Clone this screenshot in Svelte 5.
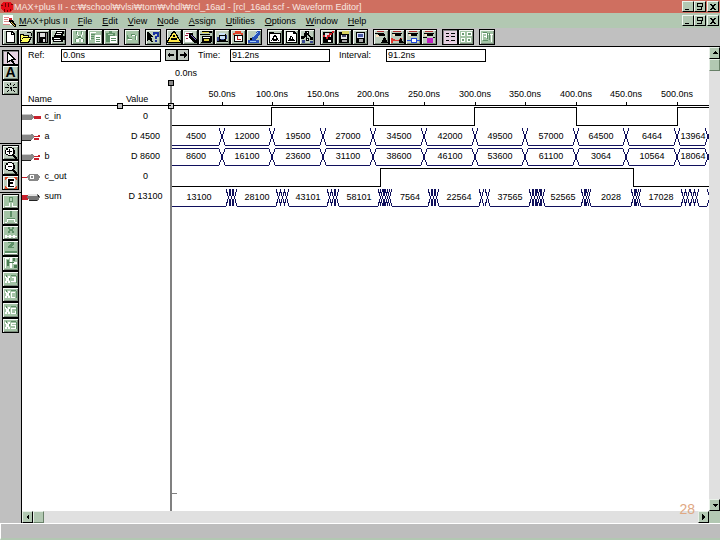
<script>
	const menus = ['MAX+plus II', 'File', 'Edit', 'View', 'Node', 'Assign', 'Utilities', 'Options', 'Window', 'Help'];

	// each icon is a list of [fill, path] on a 16x16 grid
	const icons = {
		page: [['#000', 'M4 2h6l3 3v9H4z'], ['#fff', 'M5 3h4v3h3v7H5z'], ['#fff', 'M10 4h1v1h-1z']],
		open: [['#000', 'M9 3h4v1H9zM13 4h1v3h-1zM2 5h4v1h5v2h3l-3 6H2z'], ['#ffff60', 'M3 6h2v1h5v1H5l-2 4zM5 9h7l-2 4H3z']],
		save: [['#000', 'M3 3h11v11H3z'], ['#888', 'M4 4h1v9H4zM12 4h1v9h-1z'], ['#ddd', 'M6 4h5v4H6zM9 10h2v3H9z']],
		print: [['#000', 'M6 2h8v3h-1v2h2v4h-2v2H3v-2H2V8h2V6h1z'], ['#fff', 'M7 3h5v1H7zM6 5h5v1H6zM4 9h6v1H4zM4 11h7v1H4z']],
		cut: [['#fff', 'M6 3h1v3H6zM11 3h1v3h-1zM7 6h1v2H7zM10 6h1v2h-1zM8 8h2v2H8zM5 10h3v3H5zM10 10h3v3h-3z'], ['#5e8f67', 'M5 2h1v3H5zM10 2h1v3h-1zM7 7h3v2H7zM5 9h2v1H5zM4 10h1v3H4zM10 9h2v1h-2zM12 10h1v3h-1z']],
		copy: [['#fff', 'M3 3h6v1H3zM3 3h1v8H3zM8 6h6v8H8z'], ['#5e8f67', 'M4 5h4v1H4zM4 7h3v1H4zM4 9h3v1H4zM9 8h4v1H9zM9 10h4v1H9zM9 12h4v1H9z']],
		paste: [['#5e8f67', 'M3 4h9v9H3zM6 2h3v2H6z'], ['#b5d0b5', 'M5 5h5v1H5z'], ['#fff', 'M7 7h7v7H7z'], ['#5e8f67', 'M8 9h5v1H8zM8 11h5v1H8z']],
		undo: [['#5e8f67', 'M3 6h1v2h1v1h3v1H3zM7 5h4v1h1v5h-1V7H7z'], ['#fff', 'M4 10h4v1H4zM8 6h3v1H8zM12 7h1v4h-1z']],
		help: [['#000', 'M2 3h1l5 5H6l2 5H6L4 10l-2 2z'], ['#1830a0', 'M8 3h6v5h-2v2h-2V7h2V5h-2v1H8zM10 11h2v2h-2z']],
		triangle: [['#000', 'M7 2h2l6 10v2H1v-2z'], ['#ffe84a', 'M7 4h2l5 9H2z'], ['#000', 'M7 6h2v2H7zM5 9h6v2H5z']],
		probe: [['#fff', 'M3 3h7v10H3z'], ['#a02040', 'M4 4h6v1H4zM3 6h3v1H3zM4 9h2v1H4z'], ['#000', 'M7 4h4v3l4 4v3h-3l-5-6z'], ['#8068d0', 'M9 6h1l4 5h-1z']],
		monitor: [['#000', 'M4 2h10v2H4zM2 5h10v1H2zM4 7h10v6H4z'], ['#e0d040', 'M4 3h7v1H4zM6 10h5v2H6z'], ['#fff', 'M5 8h7v1H5z'], ['#000', 'M3 13h10v1H3z']],
		chip: [['#000', 'M5 5h7v8H5zM3 12h11v1H3z'], ['#c8e0f8', 'M5 4h6v2H5zM6 7h5v3H6z'], ['#304090', 'M3 8h2v4H3zM12 6h1v4h-1zM7 10h3v1H7z']],
		clock: [['#e04028', 'M5 2h6v3H5zM3 4h2v2H3zM11 4h2v2h-2z'], ['#000', 'M4 6h9v7H4z'], ['#fff', 'M5 7h7v5H5z'], ['#b02020', 'M7 7h1v3h3v1H7z']],
		pen: [['#2850b8', 'M11 2h3v3l-4 6H6l-1-2 4-3zM2 11h11v3H2z'], ['#a8d0f8', 'M11 3h1l-4 5H7zM4 12h6v1H4z'], ['#000', 'M4 9h2v2H4z']],
		top: [['#000', 'M2 3h5v1h7v10H2z'], ['#fff', 'M3 5h10v8H3z'], ['#000', 'M7 6h2l3 6H4z'], ['#fff', 'M7 8h2v2H7zM5 11h1v1H5zM10 11h1v1h-1z']],
		sheet: [['#000', 'M3 2h8l3 3v9H3z'], ['#fff', 'M4 3h6v2h3v8H4z'], ['#000', 'M8 6l4 6H5z'], ['#fff', 'M8 8h1v2H8z']],
		tree: [['#000', 'M6 2h4v3H9l3 3h2v3h-3V9L8 6v3h2v3H7V7L4 10H2V7h3z'], ['#384890', 'M3 11h3v3H3zM11 12h3v2h-3z'], ['#fff', 'M8 3h1v1H8zM8 10h1v1H8z']],
		check: [['#000', 'M3 3h10v11H3z'], ['#ddd', 'M5 4h6v4H5z'], ['#d02028', 'M3 6h2v2h2V6h2V4h3V2h2v2h-2v2h-2v2H8v2H6V8H3z'], ['#fff', 'M8 11h3v2H8z']],
		disk: [['#000', 'M3 3h10v11H3z'], ['#d8d060', 'M6 2h7v3H6z'], ['#e4e4e4', 'M5 6h6v4H5z'], ['#446', 'M6 6h4v2H6z'], ['#aaa', 'M6 11h5v2H6z']],
		floppy: [['#000', 'M4 3h9v11H4z'], ['#dde4ff', 'M5 4h7v5H5z'], ['#4858a0', 'M6 5h5v3H6z'], ['#aaa', 'M7 10h4v3H7z']],
		faceUp: [['#b03030', 'M4 2h7v1H4z'], ['#000', 'M2 4h9v1H2zM5 5h7v2H5zM11 8h1l3 6H8z'], ['#ffe0c0', 'M3 6h3v2H3z']],
		faceRed: [['#b03030', 'M4 2h8v1H4z'], ['#000', 'M3 4h10v1H3zM6 5h6v2H6z'], ['#e03830', 'M2 9h2v1h2v1h4v-1h1V9h2v5h-2v-2H4v2H2z'], ['#ffe0c0', 'M4 5h2v2H4z'], ['#000', 'M11 9h1l3 5h-5z']],
		faceBlue: [['#b03030', 'M4 2h8v1H4z'], ['#000', 'M3 4h10v1H3zM6 5h6v2H6z'], ['#2048d8', 'M2 11h4V9h6v2h3v1h-3v2H6v-2H2z'], ['#fff', 'M7 10h4v3H7z'], ['#ffe0c0', 'M4 5h2v2H4z']],
		faceMag: [['#b03030', 'M4 2h8v1H4z'], ['#000', 'M3 4h10v1H3zM6 5h6v2H6z'], ['#c020c0', 'M6 9h6v5H6z'], ['#000', 'M2 8h4v1H2zM12 8h2v1h-2z'], ['#ffe0c0', 'M4 5h2v2H4z']],
		bars: [['#000', 'M4 4h3v1H4zM9 4h4v1H9zM4 7h3v1H4zM9 7h4v1H9zM4 11h3v1H4zM9 11h4v1H9z'], ['#e8a0c8', 'M7 6h2v1H7zM7 12h2v1H7z']],
		boxes: [['#fff', 'M3 3h4v4H3zM9 3h5v4H9zM3 9h4v4H3zM9 9h4v4H9z'], ['#6d9b73', 'M4 4h2v2H4zM10 4h3v2h-3zM4 10h2v2H4zM10 10h2v2h-2z']],
		find: [['#fff', 'M3 4h5v1H3zM3 4h1v7H3zM5 7h3v1H5zM7 4h1v5H7zM9 5h5v1H9zM12 5h1v8h-1z'], ['#5e8f67', 'M4 3h4v1H4zM8 4h1v6H8zM4 11h5v1H4zM10 4h1v7h-1z']],
		arrow: [['#000', 'M4 2h1l8 8h-3l2 4h-2l-2-3-4 2z'], ['#fff', 'M5 4l5 5H8l-1 1-2 1z']],
		edge: [['#000', 'M2 7h4v1H2zM10 7h4v1h-4zM7 7h2v2H7zM4 4h1v1H4zM5 5h1v1H5zM11 4h1v1h-1zM10 5h1v1h-1zM4 12h1v-1H4zM5 10h1v1H5zM11 11h1v1h-1zM10 10h1v1h-1zM7 3h1v2H7zM8 9h1v2H8z']],
		plus: [['#000', 'M5 2h4v1h2v2h1v4h-1v1l3 3v1h-2l-3-3H5v-1H3V9H2V5h1V3h2z'], ['#fff', 'M5 3h4v1h1v5H9v1H5V9H3V5h2z'], ['#000', 'M6 4h1v2h2v1H7v2H6V7H4V6h2z']],
		minus: [['#000', 'M5 2h4v1h2v2h1v4h-1v1l3 3v1h-2l-3-3H5v-1H3V9H2V5h1V3h2z'], ['#fff', 'M5 3h4v1h1v5H9v1H5V9H3V5h2z'], ['#000', 'M5 6h4v1H5z']],
		fit: [['#fff', 'M4 3h8v10H4z'], ['#e04828', 'M2 2h3v1H4v1H3v1H2zM11 2h3v3h-1V4h-1V3h-1zM2 11h1v1h1v1h1v1H2zM13 11h1v3h-3v-1h1v-1h1z'], ['#000', 'M5 4h6v2H7v1h3v2H7v2h4v1H5z']],
		low: [['#5e8f67', 'M6 3h4v5H6z'], ['#b2d0b4', 'M7 4h2v3H7z'], ['#fff', 'M2 12h4V9h1v4H2zM9 9h1v3h4v1H9z']],
		high: [['#5e8f67', 'M7 2h2v6H7zM4 9h8v1H4z'], ['#fff', 'M4 10h1v3H4zM5 10h6v1H5zM11 10h1v3h-1zM2 13h2v1H2zM12 13h2v1h-2z']],
		unknown: [['#5e8f67', 'M5 2h2v2h2V2h2v2h-1v2h1v2H9V6H7v2H5V6h1V4H5z'], ['#fff', 'M2 10h2v1h2v-1h2v1h2v-1h2v1h2v1h-2v1h-2v-1H8v1H6v-1H4v1H2z']],
		tri: [['#5e8f67', 'M5 2h6v2L8 7h3v1H5V6l3-3H5zM2 11h12v2H2z'], ['#fff', 'M2 13h12v1H2z']],
		invert: [['#fff', 'M2 3h4v1H3v9H2zM7 3h2v10H7zM10 7h4v2h-4z'], ['#4b7d54', 'M4 5h2v6H4zM10 3h2v3h-2zM11 10h3v3h-3zM6 7h5v1H6z']]
	};

	const xIcon = (letter) => [
		['#fff', 'M2 5h2v2h1V5h2v2H6v3h1v2H5v-2H4v2H2v-2h1V7H2z' + letter],
		['#5e8f67', 'M3 4h1v2H3zM6 7h1v2H6zM8 4h5v1H8zM13 5h1v7h-1z']
	];
	icons.count = xIcon('M9 6h4v1H9zM11 7h2v4H8v-1h3z');
	icons.clk = xIcon('M8 6h4v1H9v4h3v1H8z');
	icons.group = xIcon('M8 6h5v1H9v4h3V9h1v3H8z');
	icons.state = xIcon('M8 6h5v1H9v1h4v4H8v-1h4V9H8z');

	const toolbar = [
		['page', 'open', 'save', 'print'],
		['cut', 'copy', 'paste'],
		['undo'],
		['help'],
		['triangle', 'probe', 'monitor', 'chip', 'clock', 'pen'],
		['top', 'sheet', 'tree'],
		['check', 'disk', 'floppy'],
		['faceUp', 'faceRed', 'faceBlue', 'faceMag'],
		['bars', 'boxes'],
		['find']
	];
	const disabled = ['cut', 'copy', 'paste', 'undo', 'boxes', 'find'];

	const sideTools = [
		['arrow', 'text', 'edge'],
		['plus', 'minus', 'fit'],
		['low', 'high', 'unknown', 'tri', 'invert', 'count', 'clk', 'group', 'state']
	];

	const signals = [
		{ name: 'c_in', value: '0', kind: 'in' },
		{ name: 'a', value: 'D 4500', kind: 'bus' },
		{ name: 'b', value: 'D 8600', kind: 'bus' },
		{ name: 'c_out', value: '0', kind: 'out' },
		{ name: 'sum', value: 'D 13100', kind: 'busout' }
	];

	// 50ns in pixels
	const step = 50.6;
	const tickX = (i) => Math.round(i * step);
	const ticks = [1, 2, 3, 4, 5, 6, 7, 8, 9, 10];

	const a = [4500, 12000, 19500, 27000, 34500, 42000, 49500, 57000, 64500, 6464, 13964];
	const b = [8600, 16100, 23600, 31100, 38600, 46100, 53600, 61100, 3064, 10564, 18064];
	const sum = [13100, 28100, 43101, 58101, 7564, 22564, 37565, 52565, 2028, 17028];

	// settling zones of the sum bus: start, end, number of crossings
	const zones = [
		[55, 66, 3], [105, 118, 3], [156, 168, 3], [207, 221, 5], [257, 268, 3],
		[308, 319, 2], [358, 374, 5], [410, 420, 3], [460, 470, 3], [510, 528, 4]
	];

	const busEdges = [...ticks.map((i) => [tickX(i) - 3, tickX(i) + 3, 1]), [534, 540, 1]];
	const sumEdges = [...zones, [536, 542, 1]];

	function crosses(edges, top, bottom) {
		let d = '';
		for (const [from, to, n] of edges) {
			const w = n === 1 ? to - from : 5;
			for (let i = 0; i < n; i++) {
				const x = n === 1 ? from : from + Math.round(((to - from - w) * i) / (n - 1));
				d += `M${x} ${top}L${x + w} ${bottom}M${x + w} ${top}L${x} ${bottom}`;
			}
		}
		return d;
	}

	function rail(edges, y) {
		let d = '';
		let x = 1;
		for (const [from, to] of edges) {
			d += `M${x} ${y}H${from}`;
			x = to;
		}
		return d;
	}

	function center(edges, i) {
		const from = i ? edges[i - 1][1] : 1;
		return Math.round((from + edges[i][0]) / 2);
	}
</script>

{#snippet icon(name)}
	<svg class="icon" viewBox="1 1 14 14" aria-hidden="true">
		{#each icons[name] as [fill, d]}
			<path {fill} {d} />
		{/each}
	</svg>
{/snippet}

{#snippet windowButtons(kind)}
	<div class="window-buttons">
		<button aria-label="Minimize {kind}"><svg viewBox="1 1 10 9"><path d="M3 8h4v1H3z" /></svg></button>
		<button aria-label="Restore {kind}"><svg viewBox="1 1 10 9"><path d="M3 2h6v1H4v2h4v4H3V8h4V6H3zM8 3h1v3H8z" /></svg></button>
		<button class="close" aria-label="Close {kind}"><svg viewBox="1 1 10 9"><path d="M3 3h2v1h2V3h2v1H8v1H7v2h1v1h1v1H7V8H5v1H3V8h1V7h1V5H4V4H3z" /></svg></button>
	</div>
{/snippet}

<div class="app">
	<header class="title-bar">
		<svg class="logo" viewBox="0 0 14 12">
			<path fill="#e80c18" d="M3 1h8l2 3v4l-3 3H4L1 8V4z" />
			<path fill="#700" d="M1 4h2v1H1zM11 3h2v1h-2zM4 8h1v3H4zM7 9h1v2H7zM10 8h1v2h-1zM5 2h1v4H5zM8 2h1v4H8z" />
		</svg>
		<h1>MAX+plus II - c:₩school₩vlsi₩tom₩vhdl₩rcl_16ad - [rcl_16ad.scf - Waveform Editor]</h1>
		{@render windowButtons('application')}
	</header>

	<nav class="menu-bar">
		<svg class="doc" viewBox="0 0 14 12">
			<path fill="#fff" d="M1 0h10v10H1z" />
			<path fill="#d88" d="M2 2h5v1H2zM2 4h4v1H2zM2 6h5v1H2zM1 9h7v1H1z" />
			<path fill="#000" d="M8 4h2l4 6v2h-2L7 7z" />
			<path fill="#e0c040" d="M9 6l4 5h-1L8 7z" />
			<path fill="#c8202c" d="M7 3h3v2H7z" />
		</svg>
		{#each menus as menu}
			<button class="menu"><u>{menu[0]}</u>{menu.slice(1)}</button>
		{/each}
		{@render windowButtons('document')}
	</nav>

	<div class="toolbar">
		{#each toolbar as group}
			<div class="group">
				{#each group as name}
					<button
						class="tool"
						class:off={disabled.includes(name)}
						class:pressed={name === 'bars'}
						aria-label={name}
					>
						{@render icon(name)}
					</button>
				{/each}
			</div>
		{/each}
	</div>

	<div class="workspace">
		<aside class="side">
			{#each sideTools as group, g}
				<div class="side-group" class:values={g === 2}>
					{#each group as name}
						<button class="tool" class:pressed={name === 'arrow'} class:off={g === 2} aria-label={name}>
							{#if name === 'text'}
								<b>A</b>
							{:else}
								{@render icon(name)}
							{/if}
						</button>
					{/each}
				</div>
			{/each}
		</aside>

		<main class="editor">
			<div class="fields">
				<label class="ref-label" for="ref">Ref:</label>
				<input id="ref" value="0.0ns" />
				<div class="steps">
					<button aria-label="Previous transition"><svg viewBox="0 0 10 10"><path d="M1 5l3-3v2h4v2H4v2z" /></svg></button>
					<button aria-label="Next transition"><svg viewBox="0 0 10 10"><path d="M9 5L6 2v2H2v2h4v2z" /></svg></button>
				</div>
				<label class="time-label" for="time">Time:</label>
				<input id="time" value="91.2ns" />
				<label class="interval-label" for="interval">Interval:</label>
				<input id="interval" value="91.2ns" />
			</div>

			<div class="waves">
				<div class="names">
					<table>
						<thead>
							<tr><th class="name">Name</th><th class="value">Value</th></tr>
						</thead>
						<tbody>
							{#each signals as { name, value, kind }}
								<tr>
									<td class="name">
										<svg class="pin" viewBox="0 0 20 10">
											{#if kind === 'in'}
												<path fill="#888" d="M0 2h9l3 2v2L9 8H0z" />
												<path fill="#c8c8c8" d="M0 2h9v1H0z" />
												<path fill="#c8202c" d="M12 4h7v3h-7z" />
											{:else if kind === 'bus'}
												<path fill="#888" d="M0 2h10l3 2-4 5H0z" />
												<path fill="#d0d0d0" d="M0 2h9v1H0z" />
												<path fill="#222" d="M0 8h9v1H0z" />
												<path fill="#c8202c" d="M12 4h4V3h2v2h-6zM12 6h5v2h-5z" />
											{:else if kind === 'out'}
												<path fill="#c8202c" d="M0 5h6v1H0z" />
												<path fill="#888" d="M7 2h9l2 3-2 4H7L5 5z" />
												<path fill="#fff" d="M8 3h4v4H8z" />
												<path fill="#888" d="M9 4h2v2H9z" />
											{:else}
												<path fill="#c8202c" d="M0 3h6v5H0z" />
												<path fill="#777" d="M6 2h10l2 3-2 4H8L5 6z" />
												<path fill="#e4e4e4" d="M6 2h9v2H6z" />
												<path fill="#222" d="M7 8h8v1H7zM16 3h1v2h-1z" />
											{/if}
										</svg>
										{name}
									</td>
									<td class="value">{value}</td>
								</tr>
							{/each}
						</tbody>
					</table>
					<span class="splitter"></span>
				</div>

				<svg class="plot">
					<text x="4" y="14">0.0ns</text>
					<path class="wire" d="M0 43.5H2000" />
					{#each ticks as i}
						<path class="wire" d="M{tickX(i) + 0.5} 40V44" />
						<text class="mid" x={tickX(i)} y="35">{i * 50}.0ns</text>
					{/each}

					<path
						class="wire"
						d="M1 63.5H{tickX(2) - 1}V45.5H{tickX(4)}V63.5H{tickX(6) - 1}V45.5H{tickX(8)}V63.5H{tickX(10)}V45.5H2000"
					/>

					<path class="bus" d={crosses(busEdges, 66, 83) + rail(busEdges, 83.5)} />
					<path class="bus" d={rail(busEdges, 86.5) + crosses(busEdges, 87, 103) + rail(busEdges, 103.5)} />
					{#each a as value, i}
						<text class="mid" x={center(busEdges, i)} y="77">{value}</text>
						<text class="mid" x={center(busEdges, i)} y="97">{b[i]}</text>
					{/each}

					<path class="wire" d="M1 124.5H209V106.5H462V124.5H2000" />

					<path class="bus" d={crosses(sumEdges, 127, 144) + rail(sumEdges, 144.5)} />
					{#each sum as value, i}
						<text class="mid" x={center(sumEdges, i)} y="138">{value}</text>
					{/each}

					<rect fill="#808080" x="-1" y="20" width="2" height="100%" />
					<path stroke="#808080" d="M0 431.5H6" />
					<rect class="handle" x="-2.5" y="18.5" width="5" height="5" />
					<rect class="handle light" x="-2.5" y="41.5" width="5" height="5" />
				</svg>
			</div>

			<div class="scroll horizontal">
				<button aria-label="Scroll left"><svg viewBox="1 1 9 10"><path d="M7 3v6L4 6z" /></svg></button>
				<span class="thumb"></span>
				<button class="end" aria-label="Scroll right"><svg viewBox="1 1 9 10"><path d="M4 3v6l3-3z" /></svg></button>
			</div>
			<span class="page-number">28</span>
		</main>

		<div class="scroll vertical">
			<button aria-label="Scroll up"><svg viewBox="1 1 9 10"><path d="M3 7h6L6 4z" /></svg></button>
			<span class="thumb"></span>
			<button class="end" aria-label="Scroll down"><svg viewBox="1 1 9 10"><path d="M3 5h6L6 8z" /></svg></button>
			<span class="corner"></span>
		</div>
	</div>

	<footer class="status"></footer>
</div>

<style>
	:global(body) {
		margin: 0;
	}

	.app {
		display: flex;
		flex-direction: column;
		min-height: 100vh;
		background: #c0c0c0;
		color: #000;
		font: 9px/12px 'Liberation Sans', Arial, sans-serif;
	}

	.app * {
		box-sizing: border-box;
	}

	button,
	input {
		margin: 0;
		padding: 0;
		border: 0;
		border-radius: 0;
		font: inherit;
		color: inherit;
	}

	svg {
		display: block;
		shape-rendering: crispEdges;
	}

	.title-bar,
	.menu-bar {
		display: flex;
		align-items: center;
		padding-right: 1px;
	}

	.title-bar {
		height: 13px;
		background: #cf6f60;
		color: #f8e8e0;
	}

	.logo,
	.doc {
		width: 14px;
		height: 12px;
		flex: none;
	}

	h1 {
		margin: 0;
		font: inherit;
		white-space: nowrap;
	}

	.menu-bar {
		height: 15px;
		background: #b2c8b2;
	}

	.doc {
		margin: 0 3px 0 2px;
	}

	.menu {
		margin-right: 10px;
		background: none;
		white-space: nowrap;
	}

	.window-buttons {
		display: flex;
		margin-left: auto;
	}

	.window-buttons button {
		width: 12px;
		height: 11px;
		background: #b2c8b2;
		border: 1px solid;
		border-color: #eef6ee #000 #000 #eef6ee;
	}

	.window-buttons .close {
		margin-left: 1px;
	}

	.toolbar {
		display: flex;
		gap: 5px;
		height: 19px;
		padding: 1px 2px;
		border-bottom: 1px solid #000;
	}

	.group {
		display: flex;
	}

	.tool {
		display: flex;
		align-items: center;
		justify-content: center;
		width: 16px;
		height: 16px;
		background: #bcccbc;
		border: 1px solid #000;
		box-shadow: inset 1px 1px #f4f8f4, inset -1px -1px #7c8c7c;
	}

	.tool.off {
		background: #a4c4a6;
	}

	.tool.pressed {
		background: #e6d2e2;
		box-shadow: inset 1px 1px #888;
	}

	.tool b {
		font: bold 14px/13px 'Liberation Sans', Arial, sans-serif;
	}

	.icon {
		width: 14px;
		height: 14px;
		flex: none;
	}

	.workspace {
		display: flex;
		flex: 1;
	}

	.side {
		width: 22px;
		flex: none;
		border-right: 1px solid #000;
	}

	.side-group {
		display: flex;
		flex-direction: column;
		height: 49px;
		padding: 1px 2px;
		border-top: 1px solid #000;
	}

	.side-group:first-child {
		height: 96px;
		padding-top: 3px;
		border-top: 0;
	}

	.side-group .tool {
		width: 17px;
		height: 15px;
	}

	.side-group.values {
		height: 142px;
	}

	.values .tool {
		flex: 1;
	}

	.editor {
		position: relative;
		display: flex;
		flex: 1;
		flex-direction: column;
		min-width: 0;
		background: #fff;
	}

	.fields {
		display: flex;
		align-items: center;
		height: 15px;
		padding-top: 1px;
	}

	.fields label {
		flex: none;
	}

	.fields input {
		width: 100px;
		height: 13px;
		padding: 0 1px;
		background: #fff;
		border: 1px solid #000;
	}

	.ref-label {
		width: 39px;
		padding-left: 6px;
	}

	.time-label {
		width: 41px;
		padding-left: 9px;
	}

	.interval-label {
		width: 56px;
		padding-left: 9px;
	}

	.steps {
		display: flex;
		margin-left: 4px;
	}

	.steps button {
		width: 12px;
		height: 12px;
		background: #c0c8c0;
		border: 1px solid #000;
	}

	.waves {
		display: flex;
		flex: 1;
		overflow: hidden;
	}

	.names {
		position: relative;
		width: 149px;
		flex: none;
	}

	table {
		width: 100%;
		border-spacing: 0;
		table-layout: fixed;
	}

	th {
		height: 44px;
		padding: 0;
		border-bottom: 1px solid #000;
		font-weight: normal;
		text-align: left;
		vertical-align: bottom;
	}

	th.name {
		width: 98px;
		padding-left: 6px;
	}

	th.value {
		padding-left: 6px;
	}

	td {
		height: 20px;
		padding: 0;
		white-space: nowrap;
	}

	td.value {
		text-align: center;
	}

	.pin {
		display: inline-block;
		width: 20px;
		height: 10px;
		vertical-align: middle;
	}

	.splitter {
		position: absolute;
		top: 41px;
		left: 95px;
		width: 6px;
		height: 6px;
		background: #c0c0c0;
		border: 1px solid #000;
	}

	.plot {
		flex: 1;
		min-width: 0;
		align-self: stretch;
		height: auto;
		overflow: visible;
	}

	.wire,
	.bus {
		fill: none;
		stroke: #000;
	}

	.bus {
		stroke: #10105c;
	}

	.mid {
		text-anchor: middle;
	}

	.handle {
		fill: #888;
		stroke: #000;
	}

	.light {
		fill: #d0d0d0;
	}

	.scroll {
		display: flex;
		background: #e0e0e0;
	}

	.scroll button,
	.thumb {
		width: 11px;
		height: 12px;
		background: #b2c8b2;
		border: 1px solid;
		border-color: #e8f0e8 #000 #000 #e8f0e8;
	}

	.thumb {
		border-color: #e8f0e8 #688068 #688068 #e8f0e8;
	}

	.scroll .end {
		margin-left: auto;
	}

	.vertical {
		flex-direction: column;
		width: 11px;
		flex: none;
	}

	.vertical .end {
		margin: auto 0 0;
	}

	.corner {
		height: 12px;
		background: #b2c8b2;
	}

	.page-number {
		position: absolute;
		right: 14px;
		bottom: 6px;
		color: #dfa883;
		font: 14px/16px 'Liberation Sans', Arial, sans-serif;
	}

	.status {
		height: 17px;
		background: #bdbdbd;
		border-top: 1px solid #fff;
		border-bottom: 2px solid #b2c8b2;
		border-left: 1px solid #fff;
	}
</style>
